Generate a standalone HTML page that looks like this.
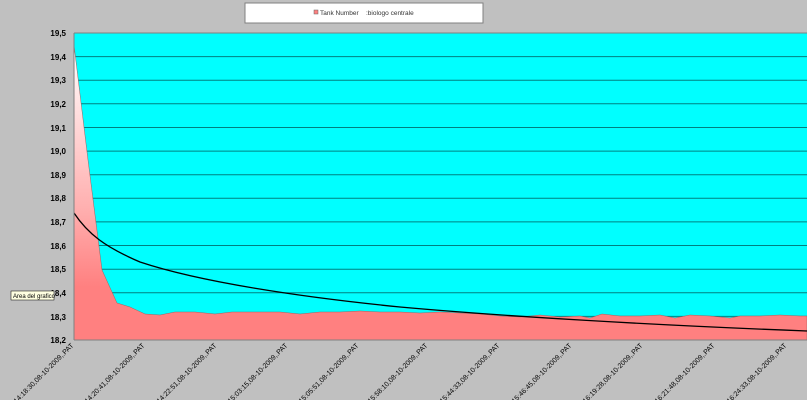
<!DOCTYPE html>
<html><head><meta charset="utf-8"><style>
body{margin:0;width:807px;height:400px;background:#c0c0c0;overflow:hidden;font-family:"Liberation Sans",Arial,sans-serif}
</style></head><body>
<svg width="807" height="400" xmlns="http://www.w3.org/2000/svg" style="position:absolute;left:0;top:0">
<defs>
<linearGradient id="g" x1="0" y1="0" x2="0" y2="1">
<stop offset="0" stop-color="#ffffff"/>
<stop offset="0.55" stop-color="#ffb0b0"/>
<stop offset="0.82" stop-color="#ff8080"/>
<stop offset="1" stop-color="#ff8080"/>
</linearGradient>
</defs>
<rect x="245" y="3" width="238" height="20" fill="#fff" stroke="#808080"/>
<rect x="314" y="10" width="4" height="4" fill="#ff8080" stroke="#666" stroke-width="0.5"/>
<text x="320" y="15" font-size="6.5" fill="#333">Tank Number</text>
<text x="366" y="15" font-size="6.5" fill="#333">:biologo centrale</text>
<rect x="74" y="33" width="733" height="307" fill="#00ffff"/>
<g stroke="#008080" stroke-width="1">
<line x1="74" y1="56.6" x2="807" y2="56.6"/><line x1="74" y1="80.2" x2="807" y2="80.2"/>
<line x1="74" y1="103.8" x2="807" y2="103.8"/><line x1="74" y1="127.5" x2="807" y2="127.5"/>
<line x1="74" y1="151.1" x2="807" y2="151.1"/><line x1="74" y1="174.7" x2="807" y2="174.7"/>
<line x1="74" y1="198.3" x2="807" y2="198.3"/><line x1="74" y1="221.9" x2="807" y2="221.9"/>
<line x1="74" y1="245.5" x2="807" y2="245.5"/><line x1="74" y1="269.2" x2="807" y2="269.2"/>
<line x1="74" y1="292.8" x2="807" y2="292.8"/><line x1="74" y1="316.4" x2="807" y2="316.4"/>
</g>
<path d="M74,45 L88,160 L102,270 L117,303 L130,307 L145,314 L160,315 L175,312 L195,312 L215,314 L232,312 L260,312 L280,312 L300,314 L320,312 L340,312 L360,311 L380,312 L400,312 L420,313 L440,312 L460,313 L480,314 L500,316 L520,317 L540,315 L560,317 L580,316 L590,318 L602,314 L620,316 L640,316 L660,315 L675,318 L690,315 L710,316 L730,318 L740,316 L760,316 L780,315 L800,316 L807,316 L807,340 L74,340 Z" fill="url(#g)" stroke="#a06060" stroke-width="0.5"/>
<path d="M74,213 C88,234 105,247 140,262 C200,282 300,297 400,307 C500,316 650,325 807,331" fill="none" stroke="#000" stroke-width="1.3"/>
<line x1="74" y1="33" x2="807" y2="33" stroke="#808080"/>
<line x1="74" y1="33" x2="74" y2="340" stroke="#808080"/>
<line x1="74" y1="340" x2="807" y2="340" stroke="#808080"/>
<g font-size="8" font-weight="bold" text-anchor="end" fill="#000">
<text x="66" y="36">19,5</text><text x="66" y="60">19,4</text><text x="66" y="83">19,3</text>
<text x="66" y="107">19,2</text><text x="66" y="131">19,1</text><text x="66" y="154">19,0</text>
<text x="66" y="178">18,9</text><text x="66" y="201">18,8</text><text x="66" y="225">18,7</text>
<text x="66" y="249">18,6</text><text x="66" y="272">18,5</text><text x="66" y="296">18,4</text>
<text x="66" y="320">18,3</text><text x="66" y="343">18,2</text>
</g>
<rect x="11" y="291" width="43" height="9" fill="#ffffe1" stroke="#000" stroke-width="0.5"/>
<text x="13" y="298" font-size="6" fill="#000">Area del grafico</text>
<g font-size="7" text-anchor="end" fill="#000">
<text transform="translate(74,346) rotate(-45)">14:18:30,08-10-2009,.PAT</text>
<text transform="translate(145,346) rotate(-45)">14:20:41,08-10-2009,.PAT</text>
<text transform="translate(217,346) rotate(-45)">14:22:51,08-10-2009,.PAT</text>
<text transform="translate(288,346) rotate(-45)">15:03:15,08-10-2009,.PAT</text>
<text transform="translate(359,346) rotate(-45)">15:05:51,08-10-2009,.PAT</text>
<text transform="translate(428,346) rotate(-45)">15:58:10,08-10-2009,.PAT</text>
<text transform="translate(500,346) rotate(-45)">15:44:33,08-10-2009,.PAT</text>
<text transform="translate(572,346) rotate(-45)">15:46:45,08-10-2009,.PAT</text>
<text transform="translate(643,346) rotate(-45)">16:19:28,08-10-2009,.PAT</text>
<text transform="translate(715,346) rotate(-45)">16:21:48,08-10-2009,.PAT</text>
<text transform="translate(787,346) rotate(-45)">16:24:33,08-10-2009,.PAT</text>
</g>
</svg>
</body></html>
